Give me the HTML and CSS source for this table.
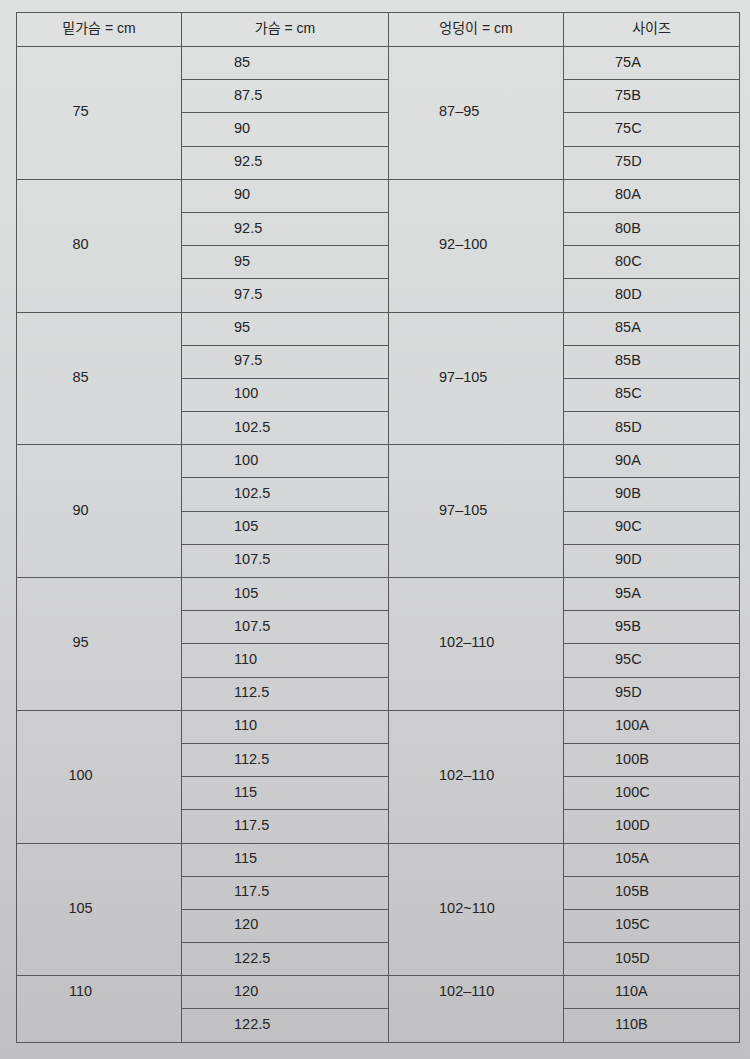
FILE: index.html
```html
<!DOCTYPE html>
<html lang="ko">
<head>
<meta charset="utf-8">
<title>사이즈표</title>
<link rel="stylesheet" href="styles.css">
</head>
<body>
<div class="sheet">
<table class="chart">
  <colgroup>
    <col class="c1"><col class="c2"><col class="c3"><col class="c4">
  </colgroup>
  <thead>
    <tr class="head">
      <th>밑가슴 = cm</th><th>가슴 = cm</th><th>엉덩이 = cm</th><th>사이즈</th>
    </tr>
  </thead>
  <tbody>
    <tr><td class="under" rowspan="4">75</td><td class="bust">85</td><td class="hip" rowspan="4">87–95</td><td class="size">75A</td></tr>
    <tr><td class="bust">87.5</td><td class="size">75B</td></tr>
    <tr><td class="bust">90</td><td class="size">75C</td></tr>
    <tr><td class="bust">92.5</td><td class="size">75D</td></tr>

    <tr><td class="under" rowspan="4">80</td><td class="bust">90</td><td class="hip" rowspan="4">92–100</td><td class="size">80A</td></tr>
    <tr><td class="bust">92.5</td><td class="size">80B</td></tr>
    <tr><td class="bust">95</td><td class="size">80C</td></tr>
    <tr><td class="bust">97.5</td><td class="size">80D</td></tr>

    <tr><td class="under" rowspan="4">85</td><td class="bust">95</td><td class="hip" rowspan="4">97–105</td><td class="size">85A</td></tr>
    <tr><td class="bust">97.5</td><td class="size">85B</td></tr>
    <tr><td class="bust">100</td><td class="size">85C</td></tr>
    <tr><td class="bust">102.5</td><td class="size">85D</td></tr>

    <tr><td class="under" rowspan="4">90</td><td class="bust">100</td><td class="hip" rowspan="4">97–105</td><td class="size">90A</td></tr>
    <tr><td class="bust">102.5</td><td class="size">90B</td></tr>
    <tr><td class="bust">105</td><td class="size">90C</td></tr>
    <tr><td class="bust">107.5</td><td class="size">90D</td></tr>

    <tr><td class="under" rowspan="4">95</td><td class="bust">105</td><td class="hip" rowspan="4">102–110</td><td class="size">95A</td></tr>
    <tr><td class="bust">107.5</td><td class="size">95B</td></tr>
    <tr><td class="bust">110</td><td class="size">95C</td></tr>
    <tr><td class="bust">112.5</td><td class="size">95D</td></tr>

    <tr><td class="under" rowspan="4">100</td><td class="bust">110</td><td class="hip" rowspan="4">102–110</td><td class="size">100A</td></tr>
    <tr><td class="bust">112.5</td><td class="size">100B</td></tr>
    <tr><td class="bust">115</td><td class="size">100C</td></tr>
    <tr><td class="bust">117.5</td><td class="size">100D</td></tr>

    <tr><td class="under" rowspan="4">105</td><td class="bust">115</td><td class="hip" rowspan="4">102~110</td><td class="size">105A</td></tr>
    <tr><td class="bust">117.5</td><td class="size">105B</td></tr>
    <tr><td class="bust">120</td><td class="size">105C</td></tr>
    <tr><td class="bust">122.5</td><td class="size">105D</td></tr>

    <tr><td class="under top" rowspan="2">110</td><td class="bust">120</td><td class="hip top" rowspan="2">102–110</td><td class="size">110A</td></tr>
    <tr><td class="bust">122.5</td><td class="size">110B</td></tr>
  </tbody>
</table>
</div>
</body>
</html>
```

FILE: styles.css
```css
html, body {
  margin: 0;
  padding: 0;
}
body {
  width: 750px;
  height: 1059px;
  overflow: hidden;
  background: linear-gradient(180deg, #dfe0e0 0%, #d6d7d8 45%, #c9c9cb 80%, #c0c0c2 100%);
  font-family: "Liberation Sans", Arial, "Noto Sans CJK KR", sans-serif;
  color: #252525;
}
.sheet {
  padding: 12px 0 0 16px;
}
.chart {
  border-collapse: collapse;
  table-layout: fixed;
  width: 723px;
  font-size: 14.5px;
  border: 1px solid #4d4d4d;
}
.c1 { width: 165px; }
.c2 { width: 207px; }
.c3 { width: 175px; }
.c4 { width: 176px; }
.chart th,
.chart td {
  border: 1px solid #585858;
  padding: 0 0 3px 0;
  height: 29.2px;
  line-height: 16px;
  vertical-align: middle;
}
.chart .head th {
  height: 29px;
  padding-bottom: 4px;
  font-weight: normal;
  text-align: center;
  font-size: 14px;
}
.chart td.under {
  text-align: center;
  padding-right: 37px;
}
.chart td.bust {
  text-align: left;
  padding-left: 52px;
}
.chart td.hip {
  text-align: left;
  padding-left: 50px;
}
.chart td.size {
  text-align: left;
  padding-left: 51px;
}
.chart td.top {
  vertical-align: top;
  padding-top: 7px;
}
```
